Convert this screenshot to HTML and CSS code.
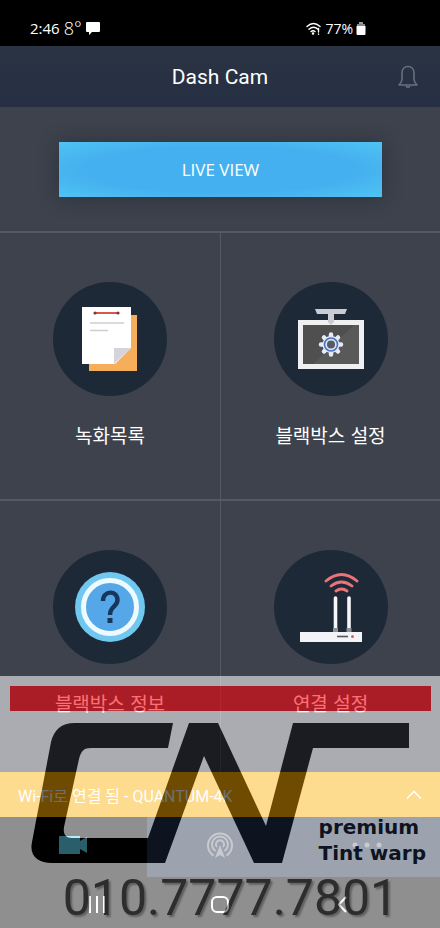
FILE: index.html
```html
<!DOCTYPE html>
<html lang="ko">
<head>
  <meta charset="UTF-8" />
  <meta name="viewport" content="width=device-width, initial-scale=1.0"/>
  <title>Dash Cam</title>
  <link rel="stylesheet" href="styles.css">
</head>
<body>
<div class="screen">

  <div class="status">
    <div class="status-left">
      <span class="time">2:46</span>
      <span class="temp">8°</span>
      <svg width="14" height="13" viewBox="0 0 14 13"><path d="M1 0h12q1 0 1 1v8q0 1-1 1H6l-3 3v-3H1q-1 0-1-1V1q0-1 1-1z" fill="#fff"/></svg>
    </div>
    <div class="status-right">
      <svg width="16" height="13" viewBox="0 0 16 13" fill="none" stroke="#fff" stroke-width="1.4" stroke-linecap="round">
        <path d="M1 4.5q6.500-6 13 0M3 7.200q4.500-4 9 0M5 9.500q2-1.600 4 0"/>
        <circle cx="7" cy="11.500" r=".6" fill="#fff"/>
        <path d="M12.500 6.500v3.500M12.500 12v.2"/>
      </svg>
      <span class="battery-text">77%</span>
      <svg width="10" height="13" viewBox="0 0 10 13"><path d="M3 0h4v2H3z" fill="#999"/><path d="M1 2h8v3H1z" fill="#888"/><path d="M.5 4h9v8q0 1-1 1h-7q-1 0-1-1z" fill="#fff"/></svg>
    </div>
  </div>

  <header class="header">
    <h1>Dash Cam</h1>
    <button class="bell" aria-label="알림">
      <svg width="20" height="24" viewBox="0 0 20 24" fill="none" stroke="#68707d" stroke-width="1.600" stroke-linejoin="round">
        <path d="M1 20c2-2 3-3.500 3-6V8c0-4 2.500-6.500 6-6.500S16 4 16 8v6c0 2.500 1 4 3 6z"/>
        <path d="M8 21q2 2.500 4 0"/>
      </svg>
    </button>
  </header>

  <div class="live">
    <button class="live-btn">LIVE VIEW</button>
  </div>

  <main class="menu">
    <a class="item" href="#list">
      <span class="circle">
        <svg width="56" height="64" viewBox="0 0 56 64">
          <path d="M7 8h48v56H7z" fill="#f7ae5a"/>
          <path d="M0 0h49v41L33 57H0z" fill="#fff"/>
          <path d="M32 41h17L32 57z" fill="#d5d4da"/>
          <path d="M12 6h25" stroke="#d9574f" stroke-width="2"/>
          <circle cx="13" cy="6" r="1.600" fill="#743b3b"/>
          <circle cx="36" cy="6" r="1.600" fill="#743b3b"/>
          <path d="M8 16h34M8 23.500h18" stroke="#cfcfd1" stroke-width="1.600"/>
        </svg>
      </span>
      <span class="label">녹화목록</span>
    </a>
    <a class="item" href="#settings">
      <span class="circle">
        <svg width="66" height="60" viewBox="0 0 66 60">
          <path d="M17 0h32l-2 5H36v8l-3 3-3-3V5H19z" fill="#c9ccd2"/>
          <path d="M0 11h66v49H0z" fill="#f0eff1"/>
          <path d="M5 16h56v39H5z" fill="#4f4f50"/>
          <path d="M56 16h5v39H15z" fill="#595959"/>
          <path d="M30 11h6v2l-3 3-3-3z" fill="#c9ccd2"/>
          <g transform="translate(33 35.500)">
            <g stroke="#e6ebf5" stroke-width="4.500" stroke-linecap="round">
              <path d="M0-10V10M-10 0H10M-7-7L7 7M-7 7L7-7"/>
            </g>
            <circle r="8.500" fill="#e6ebf5"/>
            <circle r="6.500" fill="#dde4ef" stroke="#4a70c4" stroke-width="1.600"/>
            <circle r="4" fill="#555b66"/>
          </g>
        </svg>
      </span>
      <span class="label">블랙박스 설정</span>
    </a>
    <a class="item" href="#info">
      <span class="circle">
        <svg width="70" height="70" viewBox="0 0 70 70">
          <circle cx="35" cy="35" r="35" fill="#70c8f0"/>
          <circle cx="35" cy="35" r="26.500" fill="#55a7e8" stroke="#effaff" stroke-width="5"/>
          <path d="M28 29c0-11 14.500-11 14.500-1 0 7-7.500 6-7.500 15" fill="none" stroke="#16365c" stroke-width="4.400"/>
          <path d="M32.500 46h5v5h-5z" fill="#16365c"/>
        </svg>
      </span>
      <span class="label">블랙박스 정보</span>
    </a>
    <a class="item" href="#connect">
      <span class="circle">
        <svg width="64" height="70" viewBox="0 0 64 70">
          <g fill="none" stroke="#ec7479" stroke-width="2.800" stroke-linecap="round">
            <path d="M27 9q15.500-13 31 0M32 14q10.500-8 21 0M37 19q5.500-4 11 0"/>
          </g>
          <path d="M36.500 26v32M50 26v32" stroke="#f7f7fa" stroke-width="3.600" stroke-linecap="round"/>
          <path d="M34 56h5v5h-5zM47.500 56h5v5h-5z" fill="#8d929b"/>
          <path d="M1 60h62v10H1z" fill="#f3f2f6"/>
          <path d="M38 64.500h11" stroke="#555" stroke-width="1.600"/>
          <circle cx="53.500" cy="64.500" r="1.500" fill="#e15a60"/>
        </svg>
      </span>
      <span class="label">연결 설정</span>
    </a>
  </main>

  <button class="wifi">
    <span>Wi-Fi로 연결 됨 - QUANTUM-4K</span>
    <svg width="16" height="10" viewBox="0 0 16 10" fill="none" stroke="#fff" stroke-width="1.600"><path d="M1 8.500l7-7 7 7"/></svg>
  </button>

  <nav class="tabs">
    <a class="tab active" href="#cam" aria-label="카메라">
      <svg width="28" height="18" viewBox="0 0 28 18" fill="#5fd8f4"><path d="M0 0h21v5l7-4v16l-7-4v5H0z"/></svg>
    </a>
    <a class="tab" href="#live" aria-label="라이브">
      <svg width="28" height="28" viewBox="0 0 28 28" fill="none" stroke="#828893" stroke-width="2">
        <path d="M7.500 24.500a12 12 0 1 1 13 0M9.500 20a8 8 0 1 1 9 0M11 16a4 4 0 1 1 6 0"/>
        <path d="M14 14l5 13-5-3-5 3z" fill="#828893" stroke="none"/>
      </svg>
    </a>
    <a class="tab" href="#more" aria-label="더보기">
      <svg width="30" height="6" viewBox="0 0 30 6" fill="#828893"><circle cx="3" cy="3" r="2.500"/><circle cx="15" cy="3" r="2.500"/><circle cx="27" cy="3" r="2.500"/></svg>
    </a>
  </nav>

  <div class="sysnav">
    <button aria-label="최근 앱"><svg width="16" height="17" viewBox="0 0 16 17" stroke="#fff" stroke-width="2"><path d="M1 0v17M8 0v17M15 0v17"/></svg></button>
    <button aria-label="홈"><svg width="18" height="17" viewBox="0 0 18 17" fill="none" stroke="#fff" stroke-width="2"><rect x="1" y="1" width="16" height="15" rx="5"/></svg></button>
    <button aria-label="뒤로"><svg width="9" height="17" viewBox="0 0 9 17" fill="none" stroke="#fff" stroke-width="2"><path d="M8 1L1 8.500 8 16"/></svg></button>
  </div>

  <!-- shop watermark -->
  <div class="mark">
    <div class="mark-bar"></div>
    <div class="mark-logo">
      <svg viewBox="0 0 378 140" aria-label="CNT">
        <path d="M142 0H44C30 0 23 7 20 19L1 119C-2 133 7 140 21 140H134L173 33 223 140H251L282 25H378V0H262L235 103 187 0H158L117 115H41C34 115 32 111 33 104L48 36C50 28 53 25 60 25H137z"/>
      </svg>
      <p class="mark-name">premium<br>Tint warp</p>
    </div>
    <p class="mark-phone">010.7777.7801</p>
  </div>

</div>
</body>
</html>
```

FILE: styles.css
```css
* {
  box-sizing: border-box;
}

body {
  margin: 0;
  background-color: #000;
  color: #fff;
  font-family: Roboto, "Noto Sans CJK KR", sans-serif;
}

button {
  border: none;
  padding: 0;
  background: none;
  color: inherit;
  font: inherit;
  cursor: pointer;
}

a {
  color: inherit;
  text-decoration: none;
}

svg {
  display: block;
}

.screen {
  position: relative;
  display: flex;
  flex-direction: column;
  min-height: 100vh;
  background-color: #3d424d;
}

.status {
  display: flex;
  justify-content: space-between;
  align-items: center;
  height: 46px;
  padding: 10px 74px 0 30px;
  background-color: #000;
  font-family: "Open Sans", sans-serif;
  font-size: 15px;
}

.status-left,
.status-right {
  display: flex;
  align-items: center;
  gap: 4px;
}

.temp {
  font-size: 18px;
  font-weight: 300;
}

.status-right {
  gap: 3px;
}

.battery-text {
  font-size: 14px;
}

.header {
  display: grid;
  grid-template-columns: 1fr auto 1fr;
  align-items: center;
  height: 61px;
  padding: 0 22px;
  background: linear-gradient(#2a3443, #262f43);
}

.header h1 {
  grid-column: 2;
  margin: 0;
  font-size: 21px;
  font-weight: 400;
}

.bell {
  justify-self: end;
}

.live {
  height: 124px;
  padding: 35px 58px 0 59px;
}

.live-btn {
  width: 100%;
  height: 55px;
  background: radial-gradient(ellipse at center, #45b0ef 60%, #4fc4f4 100%);
  box-shadow: 0 1px 20px rgba(20, 24, 32, 0.4);
  font-family: "Open Sans", sans-serif;
  font-size: 17px;
}

.menu {
  flex: 1;
  display: grid;
  grid-template-columns: 1fr 1fr;
  grid-template-rows: 268px 1fr;
}

.item {
  display: flex;
  flex-direction: column;
  align-items: center;
  padding-top: 49px;
  border-top: 2px solid #555963;
}

.item:nth-child(even) {
  border-left: 1px solid #555963;
}

.circle {
  display: flex;
  justify-content: center;
  align-items: center;
  width: 114px;
  height: 114px;
  border-radius: 50%;
  background-color: #1e2938;
}

.label {
  margin-top: 25px;
  font-family: "Noto Sans CJK KR", sans-serif;
  font-size: 19px;
  line-height: 28px;
}

.wifi {
  display: flex;
  justify-content: space-between;
  align-items: center;
  height: 45px;
  padding: 0 18px;
  background-color: #fcad00;
  font-size: 16px;
}

.tabs {
  display: grid;
  grid-template-columns: repeat(3, 1fr);
  height: 60px;
  background-color: #1f2e47;
}

.tab {
  display: flex;
  justify-content: center;
  align-items: center;
  padding-bottom: 5px;
}

.tab.active {
  background-color: #000;
}

.sysnav {
  display: grid;
  grid-template-columns: repeat(3, 1fr);
  height: 51px;
  padding: 4px 36px 0;
  background-color: #000;
}

.sysnav button {
  display: flex;
  justify-content: center;
  align-items: center;
}

/* watermark lies over the lower part of the app */
.mark {
  position: absolute;
  left: 0;
  right: 0;
  bottom: 0;
  height: 252px;
  padding: 10px 9px 0 10px;
  background-color: #fff;
  color: #000;
  opacity: 0.56;
  pointer-events: none;
}

.mark-bar {
  height: 25px;
  background-color: #ff0008;
}

.mark-logo {
  position: relative;
  margin: 12px 22px 0 21px;
}

.mark-logo svg {
  width: 100%;
}

.mark-name {
  position: absolute;
  right: -17px;
  bottom: -3px;
  margin: 0;
  font-family: "DejaVu Sans", sans-serif;
  font-size: 20px;
  font-weight: bold;
  line-height: 26px;
}

.mark-phone {
  margin: 10px 0 0;
  padding-left: 20px;
  color: #505050;
  font-size: 50px;
  line-height: 50px;
  text-align: center;
  text-shadow: 2px 2px 2px #aaa;
}
```
